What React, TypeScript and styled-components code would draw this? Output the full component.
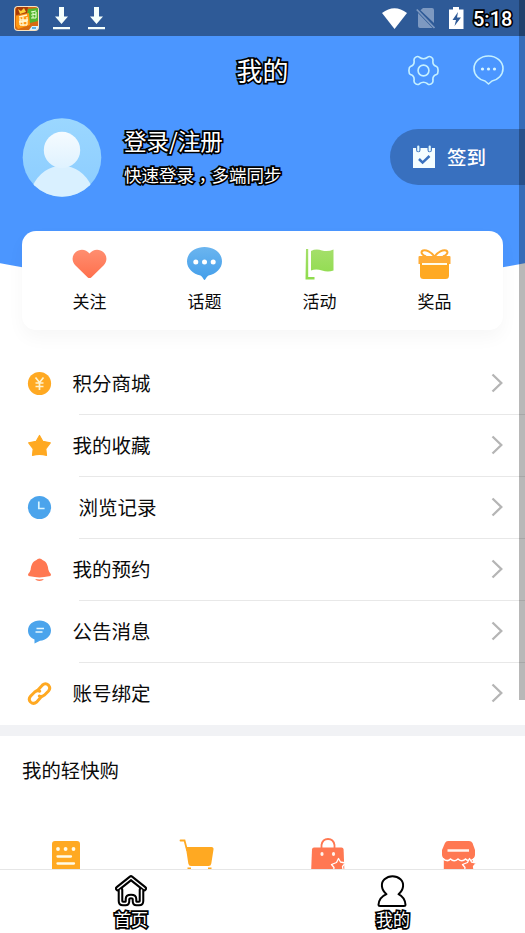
import React from "react";
import styled, { createGlobalStyle, css } from "styled-components";

const ORANGE = "#ffa922";
const CORAL = "#ff7852";
const SKY = "#4ba4ec";

const GlobalStyle = createGlobalStyle`
  * { box-sizing: border-box; }
  body { margin: 0; background: #fff; }
  svg { display: block; flex: none; }
`;

const Screen = styled.div`
  position: relative;
  display: flex;
  flex-direction: column;
  width: 525px;
  height: 933px;
  overflow: hidden;
  background: #fff;
  color: #0a0a0a;
  font-family: "Noto Sans CJK SC", sans-serif;
`;

const outlined = css<{ $stroke?: number }>`
  color: #fff;
  -webkit-text-stroke: ${(p) => p.$stroke ?? 3.4}px #000;
  paint-order: stroke fill;
  stroke-linejoin: round;
`;

const StatusBar = styled.header`
  display: flex;
  align-items: center;
  justify-content: space-between;
  flex: none;
  height: 36px;
  padding: 0 12px 0 14px;
  background: #2e5a97;
`;

const StatusGroup = styled.div<{ $gap: number }>`
  display: flex;
  align-items: center;
  gap: ${(p) => p.$gap}px;
`;

const Clock = styled.span`
  ${outlined}
  width: 40px;
  margin-left: -4px;
  font: 500 20px/36px Roboto, sans-serif;
  white-space: nowrap;
  padding-top: 2px;
`;

const Hero = styled.section`
  flex: none;
  height: 317px;
  background: radial-gradient(circle 1400px at 50% -1148px, #4b96ff 1399.5px, transparent 1400.5px);
`;

const TitleBar = styled.div`
  display: grid;
  grid-template-columns: 1fr auto 1fr;
  align-items: center;
  height: 70px;
  padding-right: 21px;
  padding-left: 21px;
`;

const Title = styled.h1`
  ${outlined}
  grid-column: 2;
  margin: 0;
  padding-bottom: 2px;
  font-size: 26px;
  font-weight: 400;
  line-height: 68px;
`;

const TitleActions = styled.div`
  display: flex;
  justify-content: flex-end;
  align-items: center;
  gap: 34px;
  padding-bottom: 2px;
`;

const Profile = styled.div`
  display: flex;
  align-items: center;
  height: 103px;
  padding-left: 22px;
`;

const ProfileText = styled.div`
  flex: 1;
  padding-left: 22px;
`;

const LoginName = styled.div`
  ${outlined}
  font-size: 22.5px;
  line-height: 34px;
`;

const LoginHint = styled.div`
  ${outlined}
  font-size: 17.5px;
  line-height: 36px;
`;

const Comma = styled.span`
  font-family: "Noto Sans CJK TC", sans-serif;
  line-height: 1;
  vertical-align: -5px;
`;

const SignIn = styled.button`
  display: flex;
  align-items: center;
  gap: 11px;
  width: 135px;
  height: 56px;
  margin-bottom: 2px;
  padding: 0 0 0 22px;
  border: 0;
  border-radius: 28px 0 0 28px;
  background: rgba(0, 0, 0, 0.25);
  color: #fff;
  font: 500 19.5px/56px "Noto Sans CJK SC", sans-serif;
`;

const Card = styled.nav`
  display: grid;
  grid-template-columns: repeat(4, 1fr);
  height: 99px;
  margin: 22px 22px 0;
  padding: 14px 11px 0 10px;
  border-radius: 14px;
  background: #fff;
  box-shadow: 0 8px 18px rgba(0, 0, 0, 0.035);
`;

const CardItem = styled.div`
  display: flex;
  flex-direction: column;
  align-items: center;
  font-size: 17px;
  line-height: 36px;
`;

const CardIcon = styled.div`
  display: flex;
  align-items: center;
  height: 38px;
`;

const List = styled.section`
  flex: none;
`;

const Row = styled.div`
  display: flex;
  align-items: center;
  height: 62px;
  padding-left: 27px;

  > svg {
    margin-bottom: 1px;
  }
`;

const RowBody = styled.div<{ $last?: boolean; $inset?: number }>`
  display: flex;
  flex: 1;
  align-items: center;
  justify-content: space-between;
  height: 62px;
  margin-left: 20.5px;
  padding: 0 22px 2px ${(p) => p.$inset ?? 0}px;
  background: ${(p) =>
    p.$last ? "none" : "linear-gradient(#e8e8e8, #e8e8e8) 6px 100% / 100% 1px no-repeat"};
  font-size: 19.5px;
`;

const RowLabel = styled.span`
  padding-bottom: 2px;
`;

const Band = styled.div`
  flex: none;
  height: 11px;
  background: #f1f2f5;
`;

const Shop = styled.section`
  flex: 1;
  min-height: 0;
  overflow: hidden;
`;

const ShopTitle = styled.h2`
  margin: 0;
  padding-left: 22px;
  font-size: 19.4px;
  font-weight: 400;
  line-height: 68px;
`;

const ShopGrid = styled.div`
  display: grid;
  grid-template-columns: repeat(4, 1fr);
  justify-items: center;
  padding-top: 34px;
`;

const TabBar = styled.nav`
  display: grid;
  grid-template-columns: 1fr 1fr;
  flex: none;
  height: 64px;
  padding-right: 1px;
  border-top: 1px solid #e6e6e6;
  background: #fff;
`;

const Tab = styled.div`
  display: flex;
  flex-direction: column;
  align-items: center;
  padding-top: 5px;
`;

const TabLabel = styled.span`
  ${outlined}
  font-size: 17px;
  line-height: 24px;
`;

const ScrollThumb = styled.div`
  position: absolute;
  top: 0;
  right: 0;
  width: 6px;
  height: 700px;
  background: rgba(0, 0, 0, 0.28);
`;

const AppBadge = () => (
  <svg width="25" height="25" viewBox="0 0 25 25">
    <rect width="25" height="25" rx="4" fill="#f7e2c0" />
    <rect x="1" y="1" width="23" height="23" rx="3" fill="#d66a12" />
    <path d="M3 1h11l-1 6-11 2V3z" fill="#a63a08" />
    <path d="M4 3l3 2 3-3 2 4-6 2z" fill="#ffcf3a" />
    <path d="M14 3l10-1v13l-8 2-3-8z" fill="#52b52e" />
    <path d="M2 10l13-3 1 12-12 4-2-3z" fill="#ff9812" />
    <path d="M5 11l8-2M6 14h8M9 10v10M5 16l8-1M6 19h7M6 12v7M13 11v8" stroke="#fff4cf" strokeWidth="1.3" fill="none" />
    <path d="M17 6l5-1M17 9l5-1M19 5v7M22 6v6M17 12h5" stroke="#e7ffd1" strokeWidth="1.1" fill="none" />
    <path d="M15 24l3-4h6v2q0 2-2 2z" fill="#d8f3ff" />
    <path d="M18 22h4" stroke="#2494d8" strokeWidth="1.4" />
  </svg>
);

const DownloadIcon = () => (
  <svg width="17" height="23" viewBox="0 0 17 23" fill="#f5fffc">
    <path d="M6 0h5v9.500h4l-6.500 7.500L2 9.500h4zM0 20h17v2.300H0z" />
  </svg>
);

const WifiIcon = () => (
  <svg width="25" height="21" viewBox="0 0 25 21">
    <path d="M0 5Q12.500-4.500 25 5L12.500 21z" fill="#fff" />
  </svg>
);

const NoSimIcon = () => (
  <svg width="20" height="21" viewBox="0 0 20 21">
    <path d="M7 0h9q2 0 2 2v13L4.500 2.200zM2 5l14.500 15H4q-2 0-2-2z" fill="#7d99c1" />
    <path d="M.8 1.500L18.500 20" stroke="#7d99c1" strokeWidth="1.800" />
  </svg>
);

const BatteryIcon = () => (
  <svg width="15" height="22" viewBox="0 0 15 22">
    <path d="M4 0h6v2.500h4.500V22H0V2.500h4z" fill="#fff" />
    <path d="M9 5L3.500 13H7l-1.500 6L12 10.500H8z" fill="#2e5a97" />
  </svg>
);

const GearIcon = () => (
  <svg width="31" height="31" viewBox="0 0 32 32" fill="none" stroke="#c5f0ff" strokeWidth="1.700" strokeLinejoin="round">
    <path d="M8 2.200Q10 .8 11.800 2.300Q16 5.500 20.200 2.300Q22 .8 24 2.200Q26.300 3.500 25.700 6.200Q25.300 10.500 29.500 11.800Q31.100 12.500 31 16Q31.100 19.500 29.500 20.200Q25.300 21.500 25.700 25.800Q26.300 28.500 24 29.800Q22 31.200 20.200 29.700Q16 26.500 11.800 29.700Q10 31.200 8 29.800Q5.700 28.500 6.300 25.800Q6.700 21.500 2.500 20.200Q.9 19.500 1 16Q.9 12.500 2.500 11.800Q6.700 10.500 6.300 6.200Q5.700 3.500 8 2.200z" />
    <circle cx="16" cy="16" r="5.600" />
  </svg>
);

const MessageIcon = () => (
  <svg width="31" height="30" viewBox="0 0 31 30">
    <path d="M15.500 1C23.500 1 30 6.500 30 13.500C30 20 25 25 19 26L15.500 29L12 26C6 25 1 20 1 13.500C1 6.500 7.500 1 15.500 1z" fill="none" stroke="#c5f0ff" strokeWidth="1.600" strokeLinejoin="round" />
    <g fill="#d8f6ff">
      <circle cx="9.500" cy="14" r="1.600" />
      <circle cx="15.500" cy="14" r="1.600" />
      <circle cx="21.500" cy="14" r="1.600" />
    </g>
  </svg>
);

const Avatar = () => (
  <svg width="80" height="80" viewBox="0 0 80 80">
    <defs>
      <linearGradient id="sky" x2="0" y2="1">
        <stop stopColor="#9bd7ff" />
        <stop offset="1" stopColor="#8bccff" />
      </linearGradient>
      <linearGradient id="head" x2="0" y2="1">
        <stop stopColor="#f5fbff" />
        <stop offset="1" stopColor="#dff2ff" />
      </linearGradient>
      <clipPath id="disc">
        <circle cx="40" cy="39.500" r="39.300" />
      </clipPath>
    </defs>
    <g clipPath="url(#disc)">
      <rect width="80" height="80" fill="url(#sky)" />
      <path d="M10 69Q20 48 40 48Q60 48 70 69V80H10z" fill="#d9f0ff" />
      <circle cx="40" cy="32" r="18.200" fill="url(#head)" />
    </g>
  </svg>
);

const CalendarIcon = () => (
  <svg width="24" height="24" viewBox="0 0 24 24">
    <path d="M1 3H23V23H1z" fill="#f4fdff" />
    <g stroke="#3971bf" strokeWidth="4.400" strokeLinecap="round">
      <path d="M6.300 1v4M17.700 1v4" />
    </g>
    <g stroke="#e2f8ff" strokeWidth="2.200" strokeLinecap="round">
      <path d="M6.300 1.500v4M17.700 1.500v4" />
    </g>
    <path d="M7 14l3.600 3.600L17.500 11" fill="none" stroke="#3971bf" strokeWidth="2.500" />
  </svg>
);

const HeartIcon = () => (
  <svg width="35" height="30" viewBox="0 0 35 30">
    <defs>
      <linearGradient id="heart" x2="0" y2="1">
        <stop stopColor="#ff8e70" />
        <stop offset="1" stopColor="#ff704d" />
      </linearGradient>
    </defs>
    <path d="M17.500 4.500C14-.5 7-.3 3.500 3.200C-.5 7.200-.3 12.500 3.500 16.500L15.500 28.200Q17.500 30 19.500 28.200L31.500 16.500C35.300 12.500 35.500 7.200 31.500 3.200C28-.3 21-.5 17.500 4.500z" fill="url(#heart)" />
  </svg>
);

const TopicIcon = () => (
  <svg width="35" height="34" viewBox="0 0 35 34">
    <defs>
      <linearGradient id="topic" x2="0" y2="1">
        <stop stopColor="#6bb5ef" />
        <stop offset="1" stopColor="#439eea" />
      </linearGradient>
    </defs>
    <path d="M17.500 0C27.500 0 35 6 35 14.500C35 21.500 29 27 21.500 28.500Q20 29 18.500 32Q17.500 34 16.500 32Q15 29 13.500 28.500C6 27 0 21.500 0 14.500C0 6 7.500 0 17.500 0z" fill="url(#topic)" />
    <g fill="#fff">
      <circle cx="8.800" cy="15" r="2.500" />
      <circle cx="17.500" cy="15" r="2.500" />
      <circle cx="26.200" cy="15" r="2.500" />
    </g>
  </svg>
);

const FlagIcon = () => (
  <svg width="29" height="31" viewBox="0 0 29 31">
    <defs>
      <linearGradient id="flag" x2="0" y2="1">
        <stop stopColor="#a5df6b" />
        <stop offset="1" stopColor="#8edc4c" />
      </linearGradient>
    </defs>
    <path d="M1 0H3.200V28H9.500V30.500H.5zM6 2Q11-.5 17 1.500Q23 3 28.500 .5V21.500Q23 23.500 17 21.500Q11 19.500 6 21.500z" fill="url(#flag)" />
  </svg>
);

const GiftIcon = () => (
  <svg width="33" height="30" viewBox="0 0 33 30">
    <g fill="none" stroke="#ffaa2f" strokeWidth="2">
      <path d="M16.500 7.500C13 3 8 .5 5 1.500C2 3 4 6 8 7.500M16.500 7.500C20 3 25 .5 28 1.500C31 3 29 6 25 7.500" />
    </g>
    <path d="M1.500 7H31.500Q32.500 7 32.500 8v7h-32V8q0-1 1-1z" fill="#ffac36" />
    <path d="M2 14H31V26.500Q31 30 27.500 30H5.500Q2 30 2 26.500z" fill="#ffa922" />
    <path d="M4 15h25" stroke="#fffbe8" strokeWidth="2" />
  </svg>
);

const YenIcon = () => (
  <svg width="25" height="25" viewBox="0 0 25 25">
    <circle cx="12.500" cy="12.500" r="11.600" fill={ORANGE} />
    <path d="M8.500 6.500l4 5 4-5M8.500 12h8M8.500 15.500h8M12.500 11.500v7.500" fill="none" stroke="#fff3cf" strokeWidth="1.700" />
  </svg>
);

const StarIcon = () => (
  <svg width="25" height="25" viewBox="0 0 25 25">
    <path d="M12.500 2.500L15.800 8.300L23.300 9.800L18.800 15.800L19.500 22.300Q12.500 20.500 5.500 22.300L6.200 15.800L1.700 9.800L9.200 8.300z" fill={ORANGE} stroke={ORANGE} strokeWidth="1.200" strokeLinejoin="round" />
  </svg>
);

const ClockIcon = () => (
  <svg width="25" height="25" viewBox="0 0 25 25">
    <circle cx="12.500" cy="12.500" r="11.600" fill={SKY} />
    <path d="M11.800 6.500v7h5.800" fill="none" stroke="#d8f4ff" strokeWidth="1.700" />
  </svg>
);

const BellIcon = () => (
  <svg width="25" height="25" viewBox="0 0 25 25" fill={CORAL}>
    <path d="M12.500 1.500Q14.500 1.500 15.500 3C19.500 4.500 21 8.500 21.300 12.500Q22 15 23.500 16.500Q25 18.800 22 19.300Q12.500 21.500 3 19.300Q0 18.800 1.500 16.500Q3 15 3.700 12.500C4 8.500 5.500 4.500 9.500 3Q10.500 1.500 12.500 1.500z" />
    <path d="M8 22Q12.500 22.800 17 22Q15.500 24 12.500 24Q9.500 24 8 22z" />
  </svg>
);

const NoticeIcon = () => (
  <svg width="25" height="25" viewBox="0 0 25 25">
    <path d="M12.500 1.500C19 1.500 24 5.800 24 11.500C24 17 19 21.500 13 21.700L7.500 24.500V20.500C3.500 19 1 15.500 1 11.500C1 5.800 6 1.500 12.500 1.500z" fill={SKY} />
    <path d="M9.500 9.500h7.500M8.500 13h7" stroke="#e5f8ff" strokeWidth="1.500" />
  </svg>
);

const LinkIcon = () => (
  <svg width="25" height="25" viewBox="0 0 25 25" fill="none" stroke={ORANGE} strokeWidth="3" strokeLinecap="round">
    <path d="M10.500 9.500L15.500 4Q18.500 1.500 21.500 4.200Q24 7 21.500 10L17.300 14.200Q14.500 16.500 12.300 15" />
    <path d="M14.500 15.500L9.500 21.200Q6.500 23.700 3.500 21Q1 18.200 3.500 15.200L7.700 11Q10.500 8.700 12.700 10.200" />
  </svg>
);

const Chevron = () => (
  <svg width="12" height="20" viewBox="0 0 12 20">
    <path d="M1.500 1.500L10.300 10L1.500 18.500" fill="none" stroke="#b5b5b5" strokeWidth="2.300" />
  </svg>
);

const OrderIcon = () => (
  <svg width="36" height="36" viewBox="0 0 36 36">
    <path d="M7 3H29Q32 3 32 6V36H4V6Q4 3 7 3z" fill={ORANGE} />
    <g fill="#fffbe9">
      <circle cx="10" cy="11" r="1.900" />
      <circle cx="17.600" cy="11" r="1.900" />
      <circle cx="25.500" cy="11" r="1.900" />
    </g>
    <path d="M9.500 18.500H23M9.500 25.500H26" stroke="#fffbe9" strokeWidth="2.300" strokeLinecap="round" />
  </svg>
);

const CartIcon = () => (
  <svg width="36" height="36" viewBox="0 0 36 36">
    <path d="M1.500 2.500H5.500L8 12" fill="none" stroke={ORANGE} strokeWidth="1.800" strokeLinecap="round" />
    <path d="M6.800 9H32.500Q34.800 9 34.500 11.500L32.300 25.500Q32 28 29.500 28H12Q9.800 28 9.300 25.500z" fill={ORANGE} />
    <path d="M8.500 30.500h3.500M29 30.500h3.500" stroke={ORANGE} strokeWidth="1.800" />
  </svg>
);

const STAR = "M28.500 20.500L30.500 24L35.500 25L32.500 28.500L33.500 34H23.500L24 29.500L21.500 26.500L26.500 24.500z";

const BagIcon = () => (
  <svg width="37" height="36" viewBox="0 0 37 36">
    <path d="M11.500 11V7Q12.500 1 18 1Q23.500 1 24.500 7V11" fill="none" stroke={CORAL} strokeWidth="1.800" />
    <path d="M4 9.500H31.500Q33.500 9.500 33.600 11.500L34.500 36H1L2 11.500Q2.100 9.500 4 9.500z" fill={CORAL} />
    <ellipse cx="12" cy="16" rx="1.600" ry="2" fill="#fff5ef" />
    <ellipse cx="23.500" cy="16" rx="1.600" ry="2" fill="#fff5ef" />
    <path d={STAR} fill={CORAL} stroke="#fff" strokeWidth="1.300" strokeLinejoin="round" />
  </svg>
);

const StoreIcon = () => (
  <svg width="37" height="36" viewBox="0 0 37 36">
    <path d="M7 3H28Q30.500 3 31.500 5L34 12V17Q33.500 20.500 30 22H5Q1.500 20.500 1 17V12L4 5Q5 3 7 3z" fill={CORAL} />
    <path d="M2.800 21H32V36H2.800z" fill={CORAL} />
    <path d="M2 20.500Q6 24.500 9.500 21Q13 24.500 17 21Q21 24.500 24.500 21Q28 24.500 33.500 20.500" fill="none" stroke="#fff" strokeWidth="1.500" />
    <path d="M6.500 12.500H28" stroke="#fff4ef" strokeWidth="2.500" />
    <path d={STAR} fill={CORAL} stroke="#fff" strokeWidth="1.300" strokeLinejoin="round" />
  </svg>
);

const HomeIcon = () => {
  const roof = "M2.800 13.500L16 3L29.200 13.500";
  const walls = "M5.500 15V26Q5.500 28.500 8 28.500H10.500Q12.500 28.500 12.500 26V24Q12.500 21.500 16 21.500Q19.500 21.500 19.500 24V26Q19.500 28.500 21.500 28.500H24Q26.500 28.500 26.500 26V15";
  return (
    <svg width="32" height="32" viewBox="0 0 32 32" fill="none" strokeLinecap="round" strokeLinejoin="round">
      <g stroke="#000" strokeWidth="5.600">
        <path d={walls} />
        <path d={roof} />
      </g>
      <g stroke="#fff" strokeWidth="1.500">
        <path d={walls} />
        <path d={roof} />
      </g>
    </svg>
  );
};

const PersonIcon = () => (
  <svg width="32" height="32" viewBox="0 0 32 32">
    <path d="M9.500 18.800C4 14.500 3.500 7.500 7.500 3.800C12 -.3 19 -.3 23.500 3.800C27.500 7.500 27 14.500 21.500 18.800Q28 22 28.500 29.500Q28.500 30.600 27 30.600H3Q1.500 30.600 1.500 29.500Q2 22 9.500 18.800z" transform="translate(0 .4)" fill="#fff" stroke="#000" strokeWidth="2" strokeLinejoin="round" />
  </svg>
);

const shortcuts = [
  { label: "关注", Icon: HeartIcon },
  { label: "话题", Icon: TopicIcon },
  { label: "活动", Icon: FlagIcon },
  { label: "奖品", Icon: GiftIcon },
];

const rows = [
  { label: "积分商城", Icon: YenIcon },
  { label: "我的收藏", Icon: StarIcon },
  { label: "浏览记录", Icon: ClockIcon, inset: 6 },
  { label: "我的预约", Icon: BellIcon },
  { label: "公告消息", Icon: NoticeIcon },
  { label: "账号绑定", Icon: LinkIcon },
];

export default function App() {
  return (
    <>
      <GlobalStyle />
      <Screen>
        <StatusBar>
          <StatusGroup $gap={18}>
            <StatusGroup $gap={14}>
              <AppBadge />
              <DownloadIcon />
            </StatusGroup>
            <DownloadIcon />
          </StatusGroup>
          <StatusGroup $gap={13}>
            <StatusGroup $gap={9}>
              <WifiIcon />
              <NoSimIcon />
            </StatusGroup>
            <BatteryIcon />
            <Clock>5:18</Clock>
          </StatusGroup>
        </StatusBar>

        <Hero>
          <TitleBar>
            <Title>我的</Title>
            <TitleActions>
              <GearIcon />
              <MessageIcon />
            </TitleActions>
          </TitleBar>
          <Profile>
            <Avatar />
            <ProfileText>
              <LoginName>登录/注册</LoginName>
              <LoginHint>
                快速登录<Comma>，</Comma>多端同步
              </LoginHint>
            </ProfileText>
            <SignIn>
              <CalendarIcon />
              签到
            </SignIn>
          </Profile>
          <Card>
            {shortcuts.map(({ label, Icon }) => (
              <CardItem key={label}>
                <CardIcon>
                  <Icon />
                </CardIcon>
                {label}
              </CardItem>
            ))}
          </Card>
        </Hero>

        <List>
          {rows.map(({ label, Icon, inset }, i) => (
            <Row key={label}>
              <Icon />
              <RowBody $inset={inset} $last={i === rows.length - 1}>
                <RowLabel>{label}</RowLabel>
                <Chevron />
              </RowBody>
            </Row>
          ))}
        </List>
        <Band />

        <Shop>
          <ShopTitle>我的轻快购</ShopTitle>
          <ShopGrid>
            <OrderIcon />
            <CartIcon />
            <BagIcon />
            <StoreIcon />
          </ShopGrid>
        </Shop>

        <TabBar>
          <Tab>
            <HomeIcon />
            <TabLabel>首页</TabLabel>
          </Tab>
          <Tab>
            <PersonIcon />
            <TabLabel>我的</TabLabel>
          </Tab>
        </TabBar>
        <ScrollThumb />
      </Screen>
    </>
  );
}
